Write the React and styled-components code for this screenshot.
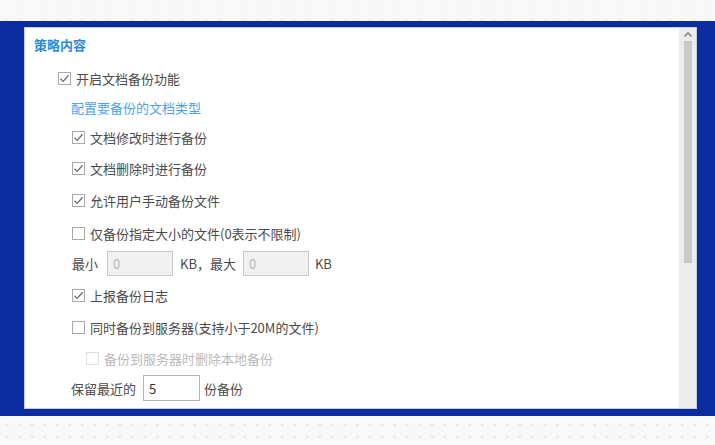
import React from "react";
import styled, { createGlobalStyle } from "styled-components";

const Global = createGlobalStyle`
  html, body { margin: 0; padding: 0; background: #f8f8f8; }
  body { font-family: "Noto Sans CJK SC", "Noto Sans", sans-serif; }
  * { box-sizing: border-box; }
`;

const Page = styled.div`
  width: 715px;
  height: 445px;
  display: flex;
  flex-direction: column;
  overflow: hidden;
`;

const Dotted = styled.div`
  height: ${(p) => p.$h}px;
  flex: none;
  background-color: #f8f8f8;
  background-image: radial-gradient(circle, ${(p) => p.$dot} 1.2px, transparent 1.6px);
  background-size: 12.5px 12px;
  background-position: 1px ${(p) => p.$offset}px;
`;

const Frame = styled.div`
  height: 395px;
  flex: none;
  background: #0b2c9f;
  padding: 6px 18px 7px 24px;
  display: flex;
`;

const Panel = styled.div`
  flex: 1;
  background: #fff;
  border: 1px solid #c6cde2;
  display: flex;
  overflow: hidden;
`;

const Content = styled.div`
  flex: 1;
  padding: 8px 0 0 9px;
  color: #4a4a4a;
  font-size: 13px;
`;

const Title = styled.div`
  color: #2b8ad6;
  font-weight: 600;
  line-height: 18px;
  margin-bottom: 10px;
`;

const Row = styled.div`
  height: 28px;
  margin-top: ${(p) => p.$mt || 0}px;
  display: flex;
  align-items: center;
  padding-left: ${(p) => p.$indent}px;
  color: ${(p) => (p.$muted ? "#b9b9b9" : "inherit")};
  white-space: nowrap;
`;

const SubHeading = styled(Row)`
  color: #4aa3ea;
`;

const Box = styled.span`
  width: 13px;
  height: 13px;
  border: 1px solid ${(p) => (p.$disabled ? "#dedede" : "#a9a9a9")};
  background: #fff;
  margin-right: 5px;
  display: inline-flex;
  align-items: center;
  justify-content: center;
  flex: none;
`;

const Field = styled.span`
  width: ${(p) => p.$w}px;
  height: ${(p) => p.$h}px;
  border: 1px solid ${(p) => (p.$disabled ? "#c9c9c9" : "#b5b5b5")};
  background: ${(p) => (p.$disabled ? "#f0f0f0" : "#fff")};
  color: ${(p) => (p.$disabled ? "#b8b8b8" : "#333")};
  margin: 0 ${(p) => p.$mr}px 0 ${(p) => p.$ml}px;
  padding-left: 5px;
  display: inline-flex;
  align-items: center;
  flex: none;
`;

const Scrollbar = styled.div`
  width: 17px;
  flex: none;
  background: #ececec;
  display: flex;
  flex-direction: column;
  align-items: center;
  padding-top: 3px;
`;

const Thumb = styled.div`
  width: 8px;
  height: 222px;
  margin-top: 3px;
  background: #c9c9c9;
`;

const Check = ({ checked, disabled }) => (
  <Box $disabled={disabled}>
    {checked && (
      <svg width="11" height="11" viewBox="0 0 11 11">
        <path d="M1.5 5.8 L4.2 8.4 L9.6 2.2" fill="none" stroke="#6a6a6a" strokeWidth="1.3" />
      </svg>
    )}
  </Box>
);

const items = [
  { label: "文档修改时进行备份", checked: true, mt: 2 },
  { label: "文档删除时进行备份", checked: true, mt: 3 },
  { label: "允许用户手动备份文件", checked: true, mt: 4 },
  { label: "仅备份指定大小的文件(0表示不限制)", checked: false, mt: 5 },
];

export default function App() {
  return (
    <Page>
      <Global />
      <Dotted $h={21} $offset={2} $dot="#f1f1f1" />
      <Frame>
        <Panel>
          <Content>
            <Title>策略内容</Title>
            <Row $indent={24}>
              <Check checked />
              开启文档备份功能
            </Row>
            <SubHeading $indent={37} $mt={1}>配置要备份的文档类型</SubHeading>
            {items.map((it) => (
              <Row key={it.label} $indent={38} $mt={it.mt}>
                <Check checked={it.checked} />
                {it.label}
              </Row>
            ))}
            <Row $indent={38} $mt={2}>
              最小
              <Field $disabled $w={66} $h={25} $ml={9} $mr={7}>0</Field>
              KB，最大
              <Field $disabled $w={66} $h={25} $ml={7} $mr={6}>0</Field>
              KB
            </Row>
            <Row $indent={38} $mt={4}>
              <Check checked />
              上报备份日志
            </Row>
            <Row $indent={38} $mt={4}>
              <Check />
              同时备份到服务器(支持小于20M的文件)
            </Row>
            <Row $indent={52} $muted $mt={3}>
              <Check disabled />
              备份到服务器时删除本地备份
            </Row>
            <Row $indent={37} $mt={2}>
              保留最近的
              <Field $w={57} $h={26} $ml={7} $mr={4}>5</Field>
              份备份
            </Row>
          </Content>
          <Scrollbar>
            <svg width="10" height="7" viewBox="0 0 10 7">
              <path d="M1.5 5.5 L5 2 L8.5 5.5" fill="none" stroke="#8a8a8a" strokeWidth="1.6" />
            </svg>
            <Thumb />
          </Scrollbar>
        </Panel>
      </Frame>
      <Dotted $h={29} $offset={3} $dot="#e9e9e9" />
    </Page>
  );
}
